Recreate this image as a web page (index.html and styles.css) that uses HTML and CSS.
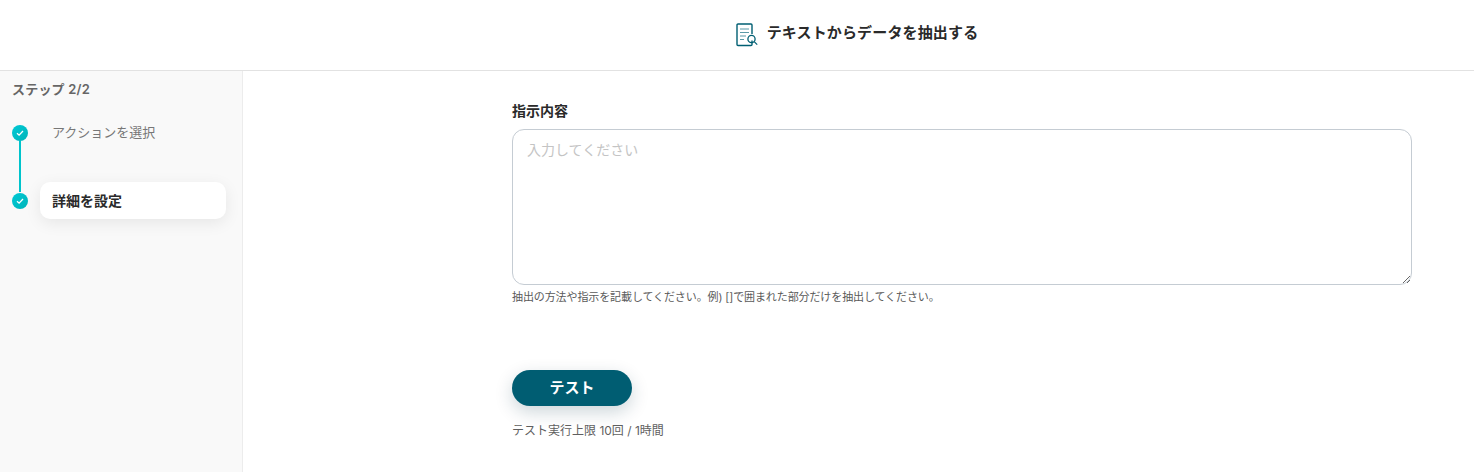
FILE: index.html
```html
<!DOCTYPE html>
<html lang="ja">
<head>
  <meta charset="UTF-8">
  <title>テキストからデータを抽出する</title>
  <link rel="stylesheet" href="styles.css">
</head>
<body>

  <header class="header">
    <svg class="header-icon" width="22" height="24" viewBox="0 0 22 24" fill="none">
      <path d="M16 17.5V21.5a1 1 0 0 1-1 1H2a1 1 0 0 1-1-1V2a1 1 0 0 1 1-1h13a1 1 0 0 1 1 1v9" stroke="#005f73" stroke-width="1.4"/>
      <path d="M4 6h9M4 9.5h9M4 13h6M4 16.5h4" stroke="#5b9aa8" stroke-width="1.2"/>
      <circle cx="15.5" cy="16" r="3.6" stroke="#005f73" stroke-width="1.3"/>
      <path d="M18.2 18.6l3 3" stroke="#005f73" stroke-width="1.3"/>
    </svg>
    <h1 class="header-title">テキストからデータを抽出する</h1>
  </header>

  <div class="layout">
    <!-- steps -->
    <aside class="sidebar">
      <div class="step-count">ステップ 2/2</div>
      <div class="steps">
        <div class="step step-done">
          <span class="step-dot">
            <svg width="10" height="10" viewBox="0 0 10 10" fill="none"><path d="M2 5.2l2.1 2L8 3" stroke="#fff" stroke-width="1.3"/></svg>
          </span>
          <span class="step-label">アクションを選択</span>
        </div>
        <div class="step step-current">
          <span class="step-dot">
            <svg width="10" height="10" viewBox="0 0 10 10" fill="none"><path d="M2 5.2l2.1 2L8 3" stroke="#fff" stroke-width="1.3"/></svg>
          </span>
          <span class="step-label">詳細を設定</span>
        </div>
      </div>
    </aside>

    <!-- form -->
    <main class="content">
      <label class="field-label" for="instruction">指示内容</label>
      <textarea class="field-input" id="instruction" placeholder="入力してください"></textarea>
      <p class="field-help">抽出の方法や指示を記載してください。例) []で囲まれた部分だけを抽出してください。</p>
      <button class="test-button">テスト</button>
      <p class="test-limit">テスト実行上限 10回 / 1時間</p>
    </main>
  </div>

</body>
</html>
```

FILE: styles.css
```css
* {
  box-sizing: border-box;
}

html, body {
  height: 100%;
}

body {
  margin: 0;
  display: flex;
  flex-direction: column;
  overflow: hidden;
  font-family: Inter, "Noto Sans CJK JP", sans-serif;
  color: #333;
  background-color: #fff;
}

.header {
  flex: none;
  height: 71px;
  padding-left: 240px;
  display: flex;
  align-items: center;
  justify-content: center;
  gap: 9px;
  border-bottom: 1px solid #e2e2e2;
}

.header-icon {
  margin-top: -1px;
}

.header-title {
  margin: 0;
  font-size: 15px;
  font-weight: 600;
  letter-spacing: 0.15px;
  color: #2a2a2a;
  line-height: 24px;
  position: relative;
  top: -2px;
}

.layout {
  flex: 1;
  display: flex;
}

.sidebar {
  flex: none;
  width: 243px;
  padding: 8px 16px 0 12px;
  background-color: #f9f9f9;
  border-right: 1px solid #ececec;
}

.step-count {
  font-size: 13px;
  font-weight: 600;
  letter-spacing: 0.2px;
  line-height: 20px;
  color: #666;
}

.steps {
  margin-top: 15px;
}

.step {
  position: relative;
  display: flex;
  align-items: center;
  gap: 12px;
  height: 37px;
}

.step + .step {
  margin-top: 31px;
}

.step-done::after {
  content: "";
  position: absolute;
  left: 7px;
  top: 26px;
  width: 2px;
  height: 52px;
  background-color: #00c4cc;
}

.step-dot {
  flex: none;
  width: 16px;
  height: 16px;
  border-radius: 50%;
  display: flex;
  align-items: center;
  justify-content: center;
  background: linear-gradient(135deg, #00c9d6, #00b4b8);
}

.step-label {
  flex: 1;
  padding-left: 12px;
  font-size: 14px;
  line-height: 37px;
  color: #777;
}

.step-done .step-label {
  font-size: 13px;
}

.step-current .step-label {
  font-weight: 600;
  color: #2a2a2a;
  background-color: #fff;
  border-radius: 10px;
  box-shadow: 0 4px 16px rgba(0, 0, 0, 0.08);
}

.content {
  flex: 1;
  padding: 30px 62px 0 269px;
}

.field-label {
  display: block;
  font-size: 14px;
  font-weight: 600;
  line-height: 20px;
  color: #2a2a2a;
}

.field-input {
  display: block;
  width: 100%;
  height: 156px;
  margin-top: 8px;
  padding: 10px 14px;
  font-family: inherit;
  font-size: 14px;
  line-height: 20px;
  border: 1px solid #c5ccd3;
  border-radius: 12px;
  outline: none;
}

.field-input::placeholder {
  color: #c4c4c4;
}

.field-help {
  margin: 4px 0 0;
  font-size: 11px;
  letter-spacing: -0.1px;
  line-height: 16px;
  color: #5a5a5a;
}

.test-button {
  display: block;
  width: 120px;
  height: 36px;
  margin-top: 65px;
  padding: 0 0 3px;
  font-family: inherit;
  font-size: 15px;
  font-weight: 600;
  color: #fff;
  background-color: #005d72;
  border: none;
  border-radius: 18px;
  box-shadow: 0 6px 18px rgba(0, 50, 70, 0.2);
}

.test-limit {
  margin: 16px 0 0;
  font-size: 12px;
  line-height: 18px;
  color: #5f5f5f;
}
```
